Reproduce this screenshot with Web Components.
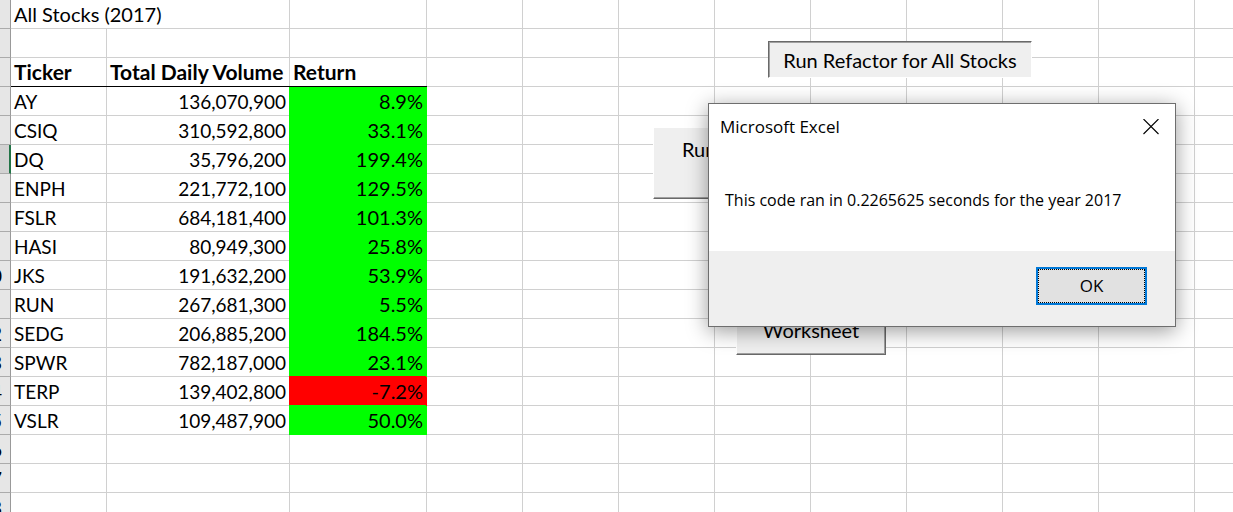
<!DOCTYPE html>
<html lang="en">
<head>
<meta charset="utf-8">
<title>All Stocks (2017)</title>
<style>
  html, body { height: 100%; margin: 0; }
  body { overflow: hidden; background: #fff; color: #000; font-family: Lato, "Liberation Sans", sans-serif; }
</style>
</head>
<body>
<stock-workbook></stock-workbook>

<template id="workbook-template">
  <style>
    :host { display: block; position: relative; height: 100%; overflow: hidden; }
    form-button, message-box { position: absolute; z-index: 2; }
    .refactor { left: 768px; top: 41px; width: 264px; height: 37px; }
    .run { left: 653px; top: 127px; width: 140px; height: 72px; }
    .clear { left: 736px; top: 290px; width: 150px; height: 65px; }
    message-box { left: 708px; top: 103px; width: 468px; }
  </style>
  <work-sheet></work-sheet>
  <form-button class="refactor" pressed>Run Refactor for All Stocks</form-button>
  <form-button class="run" align="start">Run</form-button>
  <form-button class="clear" align="end">Worksheet</form-button>
  <message-box heading="Microsoft Excel">This code ran in 0.2265625 seconds for the year 2017</message-box>
</template>

<template id="sheet-template">
  <style>
    :host { display: block; font-size: 19px; line-height: 26px; }
    table { table-layout: fixed; border-collapse: separate; border-spacing: 0; width: 0; }
    .head { width: 11px; } .a { width: 96px; } .b { width: 183px; } .c { width: 137px; } .rest { width: 96px; }
    th, td {
      box-sizing: border-box; height: 29px; padding: 2px 3px 0; text-align: left; white-space: nowrap;
      border-right: 1px solid #d0d0d0; border-bottom: 1px solid #d0d0d0;
    }
    .num { text-align: right; }
    .name, .title, .up, .down { padding-top: 0; font-size: 20px; }
    .title { position: relative; z-index: 1; font-size: 21px; font-weight: 700; }
    .title::after { content: ""; position: absolute; left: 0; right: -1px; bottom: -1px; height: 1px; background: #000; }
    .up, .down { position: relative; --fill: #0f0; background: var(--fill); border-color: var(--fill); box-shadow: -1px 0 0 var(--fill), -1px -1px 0 var(--fill); }
    .down { --fill: #f00; }
    .row-head {
      padding: 2px 0 0; overflow: hidden; background: #e6e6e6; font-weight: 400;
      border-right-color: #999; border-bottom-color: #ababab;
    }
    .row-head div { display: flex; justify-content: flex-end; }
    .row-head span { flex: none; width: 38px; text-align: center; }
    .row-head.active { background: #d2d2d2; border-right: 2px solid #217346; color: #217346; }
  </style>
  <table>
    <colgroup><col class="head"><col class="a"><col class="b"><col class="c"><col class="rest" span="12"></colgroup>
    <tbody></tbody>
  </table>
</template>

<template id="button-template">
  <style>
    :host { display: block; }
    button {
      display: flex; align-items: center; justify-content: center; box-sizing: border-box;
      width: 100%; height: 100%; margin: 0; padding: 0; border: 1px solid; border-radius: 0;
      border-color: #fff #696969 #696969 #fff; box-shadow: inset -1px -1px 0 #a0a0a0;
      background: #efefef; color: #000; font: 20px/24px Lato, "Liberation Sans", sans-serif;
    }
    :host([pressed]) button { border-color: #696969 #fff #fff #696969; box-shadow: inset 1px 1px 0 #a0a0a0; }
    :host([align="start"]) button { align-items: flex-start; justify-content: flex-start; padding: 9px 28px; }
    :host([align="end"]) button { align-items: flex-end; padding-bottom: 12px; }
  </style>
  <button type="button"><slot></slot></button>
</template>

<template id="message-template">
  <style>
    :host { display: block; font: 16px/24px "Open Sans", "Noto Sans", sans-serif; }
    section { border: 1px solid #6e6e6e; background: #fff; box-shadow: 0 4px 20px rgba(0, 0, 0, .4); }
    header { display: flex; justify-content: space-between; align-items: center; height: 45px; padding: 0 12px 0 11px; }
    h1 { margin: 0; font-size: 17px; font-weight: 400; }
    button { margin: 0; border-radius: 0; font: inherit; color: #000; }
    .close { display: flex; padding: 4px; border: 0; background: none; }
    p { margin: 0; padding: 39px 16px; white-space: nowrap; }
    footer { display: flex; justify-content: flex-end; padding: 16px 28px 21px; background: #efefef; }
    .ok { box-sizing: border-box; width: 111px; height: 38px; padding: 0; border: 2px solid #0078d7; background: #e1e1e1; font-size: 17px; outline: 1px dotted #000; outline-offset: -3px; }
  </style>
  <section role="dialog" aria-labelledby="heading">
    <header>
      <h1 id="heading"></h1>
      <button class="close" type="button" aria-label="Close">
        <svg width="16" height="16" viewBox="0 0 16 16"><path d="M.5 0l15 15M15.500 0l-15 15" fill="none" stroke="#000" stroke-width="1.100"/></svg>
      </button>
    </header>
    <p><slot></slot></p>
    <footer><button class="ok" type="button">OK</button></footer>
  </section>
</template>

<script>
  const STOCKS = [
    ['AY', '136,070,900', '8.9%'], ['CSIQ', '310,592,800', '33.1%'], ['DQ', '35,796,200', '199.4%'],
    ['ENPH', '221,772,100', '129.5%'], ['FSLR', '684,181,400', '101.3%'], ['HASI', '80,949,300', '25.8%'],
    ['JKS', '191,632,200', '53.9%'], ['RUN', '267,681,300', '5.5%'], ['SEDG', '206,885,200', '184.5%'],
    ['SPWR', '782,187,000', '23.1%'], ['TERP', '139,402,800', '-7.2%'], ['VSLR', '109,487,900', '50.0%']
  ];
  const ROWS = 18, EXTRA = 12, ACTIVE_ROW = 6;

  class TemplateElement extends HTMLElement {
    constructor() {
      super();
      this.attachShadow({ mode: 'open' })
        .append(document.getElementById(this.constructor.template).content.cloneNode(true));
    }
  }

  customElements.define('form-button', class extends TemplateElement {
    static template = 'button-template';
  });

  customElements.define('message-box', class extends TemplateElement {
    static template = 'message-template';
    connectedCallback() {
      this.shadowRoot.querySelector('h1').textContent = this.getAttribute('heading');
    }
  });

  customElements.define('work-sheet', class extends TemplateElement {
    static template = 'sheet-template';
    connectedCallback() {
      let html = '';
      for (let n = 1; n <= ROWS; n++) {
        // The heading strip is scrolled: only the edge of a wide second digit can show.
        const label = n > 9 && n !== 11 ? `<div><span>${n}</span></div>` : '';
        html += `<tr><th class="row-head${n === ACTIVE_ROW ? ' active' : ''}">${label}</th>`
          + this.cells(n) + '<td></td>'.repeat(EXTRA) + '</tr>';
      }
      this.shadowRoot.querySelector('tbody').innerHTML = html;
    }
    cells(n) {
      if (n === 1) return '<td class="name" colspan="2">All Stocks (2017)</td><td></td>';
      if (n === 3) return ['Ticker', 'Total Daily Volume', 'Return'].map(t => `<th class="title" scope="col">${t}</th>`).join('');
      const stock = STOCKS[n - 4];
      if (!stock) return '<td></td>'.repeat(3);
      const tone = stock[2].startsWith('-') ? 'down' : 'up';
      return `<td>${stock[0]}</td><td class="num">${stock[1]}</td><td class="num ${tone}">${stock[2]}</td>`;
    }
  });

  customElements.define('stock-workbook', class extends TemplateElement {
    static template = 'workbook-template';
  });
</script>
</body>
</html>
